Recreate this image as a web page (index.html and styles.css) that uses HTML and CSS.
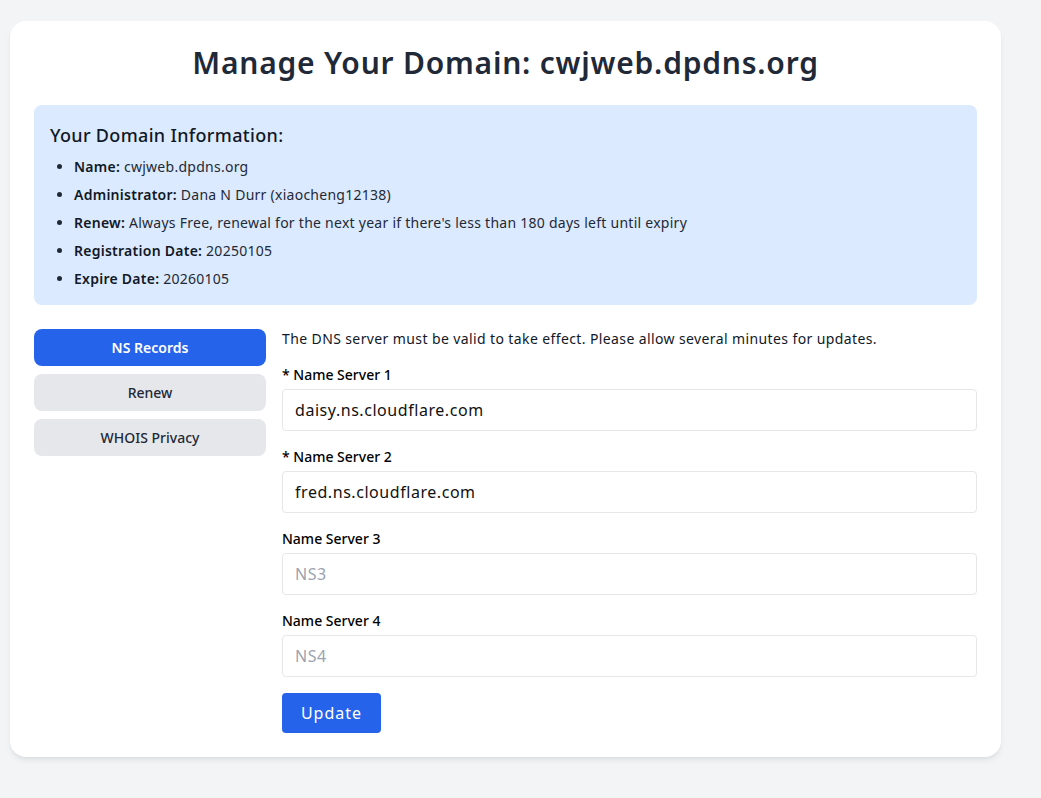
FILE: index.html
```html
<!DOCTYPE html>
<html lang="en">
<head>
<meta charset="utf-8">
<title>Manage Your Domain</title>
<link rel="stylesheet" href="styles.css">
</head>
<body>
<main class="card">
  <h1 class="title">Manage Your Domain: cwjweb.dpdns.org</h1>
  <section class="info">
    <h2 class="info-title">Your Domain Information:</h2>
    <ul class="info-list">
      <li><strong>Name:</strong> cwjweb.dpdns.org</li>
      <li><strong>Administrator:</strong> Dana N Durr (xiaocheng12138)</li>
      <li><strong>Renew:</strong> Always Free, renewal for the next year if there's less than 180 days left until expiry</li>
      <li><strong>Registration Date:</strong> 20250105</li>
      <li><strong>Expire Date:</strong> 20260105</li>
    </ul>
  </section>
  <div class="layout">
    <nav class="side">
      <button class="tab active">NS Records</button>
      <button class="tab">Renew</button>
      <button class="tab">WHOIS Privacy</button>
    </nav>
    <form class="content">
      <p class="note">The DNS server must be valid to take effect. Please allow several minutes for updates.</p>
      <div class="field">
        <label class="label">* Name Server 1</label>
        <input class="input" type="text" value="daisy.ns.cloudflare.com">
      </div>
      <div class="field">
        <label class="label">* Name Server 2</label>
        <input class="input" type="text" value="fred.ns.cloudflare.com">
      </div>
      <div class="field">
        <label class="label">Name Server 3</label>
        <input class="input" type="text" placeholder="NS3">
      </div>
      <div class="field">
        <label class="label">Name Server 4</label>
        <input class="input" type="text" placeholder="NS4">
      </div>
      <div class="actions">
        <button type="button" class="submit">Update</button>
      </div>
    </form>
  </div>
</main>
</body>
</html>
```
FILE: styles.css
```css
* { box-sizing: border-box; }
html, body { margin: 0; }
body {
  background: #f3f4f6;
  padding: 21px 10px 40px;
  font-family: "Noto Sans", "Open Sans", sans-serif;
  color: #1f2937;
}
.card {
  width: 991px;
  background: #fff;
  border-radius: 16px;
  box-shadow: 0 4px 6px -1px rgba(0,0,0,0.08), 0 2px 4px -2px rgba(0,0,0,0.06);
  padding: 24px;
}
.title {
  margin: 0 0 24px;
  text-align: center;
  font-size: 30px;
  line-height: 36px;
  font-weight: 600;
  letter-spacing: 0.78px;
  color: #1f2937;
}
.info {
  background: #dbeafe;
  border-radius: 8px;
  padding: 16px;
  margin-bottom: 24px;
}
.info-title {
  margin: 0 0 8px;
  font-size: 18px;
  line-height: 28px;
  font-weight: 500;
  letter-spacing: 0.33px;
  color: #111827;
}
.info-list {
  margin: 0;
  padding-left: 24px;
  list-style: disc;
  font-size: 14px;
  line-height: 20px;
  letter-spacing: 0.26px;
  color: #1f2937;
}
.info-list li + li { margin-top: 8px; }
.info-list strong { font-weight: 600; color: #111827; }
.layout {
  display: flex;
  gap: 16px;
  align-items: flex-start;
}
.side {
  width: 232px;
  flex: none;
  display: flex;
  flex-direction: column;
  gap: 8px;
}
.tab {
  border: 0;
  border-radius: 8px;
  background: #e5e7eb;
  color: #1f2937;
  font-family: inherit;
  font-size: 14px;
  line-height: 21px;
  font-weight: 500;
  padding: 8px 16px;
  text-align: center;
}
.tab.active {
  background: #2563eb;
  color: #fff;
  font-weight: 600;
}
.content {
  flex: 1;
  min-width: 0;
  display: flex;
  flex-direction: column;
  gap: 16px;
}
.note {
  margin: 0;
  font-size: 14px;
  line-height: 20px;
  letter-spacing: 0.39px;
  color: #111827;
}
.field { display: flex; flex-direction: column; gap: 4px; }
.label {
  font-size: 14px;
  line-height: 20px;
  font-weight: 500;
  color: #000;
}
.input {
  height: 42px;
  border: 1px solid #e5e7eb;
  border-radius: 4px;
  padding: 8px 12px;
  font-family: inherit;
  font-size: 16px;
  line-height: 24px;
  letter-spacing: 0.55px;
  color: #111;
  background: #fff;
}
.input::placeholder { color: #9ca3af; }
.actions { display: flex; }
.submit {
  border: 0;
  border-radius: 4px;
  background: #2563eb;
  color: #fff;
  font-family: inherit;
  font-size: 16px;
  line-height: 24px;
  letter-spacing: 1px;
  padding: 8px 16px;
  width: 99px;
}
```
